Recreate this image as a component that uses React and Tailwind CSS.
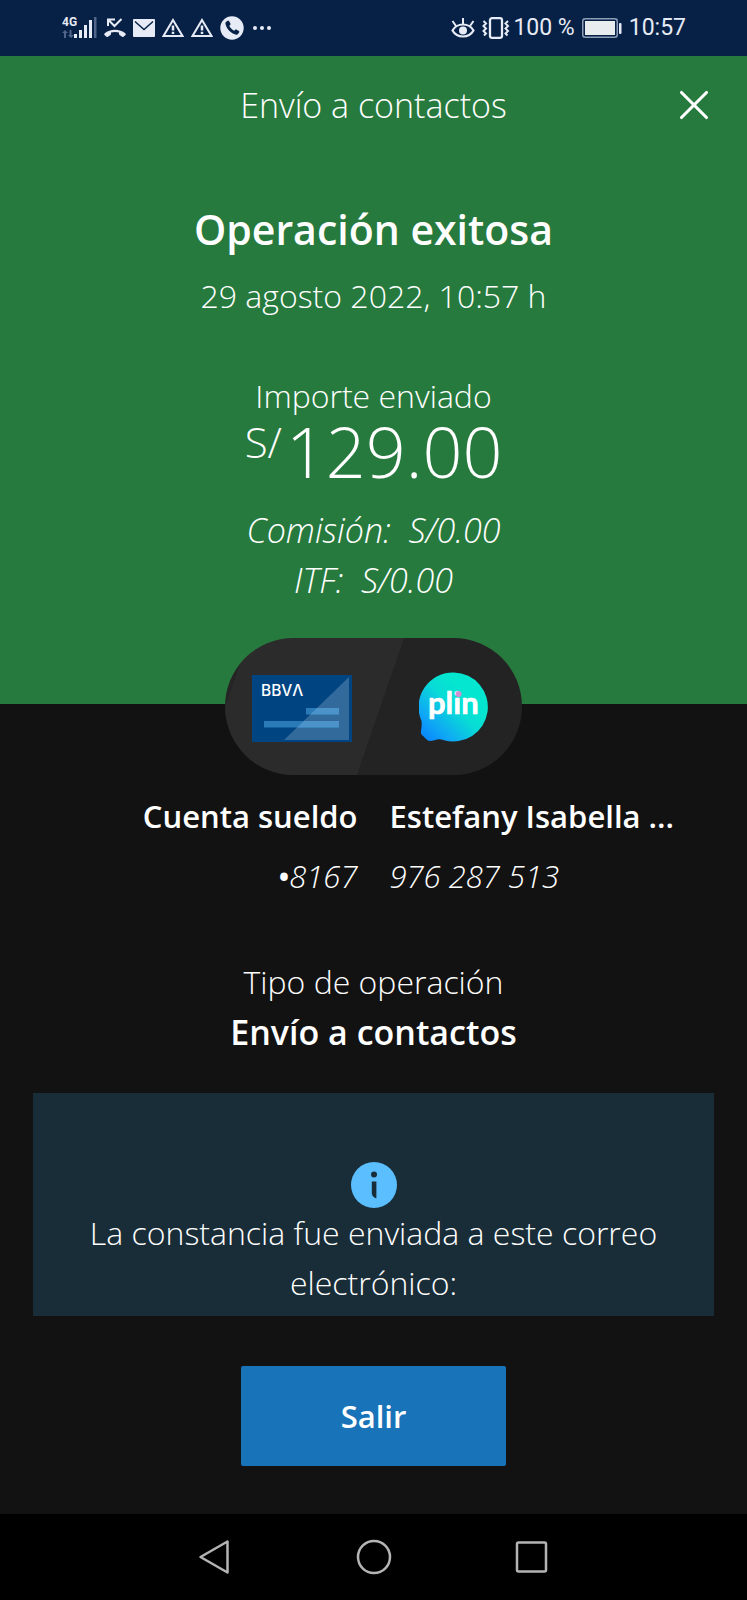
import { X } from 'lucide-react';

const SignalIcon = () => (
  <svg width="35" height="24" viewBox="0 0 35 24" fill="#e6ebf5">
    <text x="0" y="10" fontSize="12" fontWeight="700" fontFamily="Roboto, sans-serif">4G</text>
    <g fill="#51648a">
      <path d="M3 14l3 3H4v5H2v-5H0zM9 22l-3-3h1.500v-5h2v5H12z" />
      <rect x="32" y="1" width="2.500" height="21" />
    </g>
    <rect x="12" y="18" width="3" height="4" />
    <rect x="17" y="14" width="3" height="8" />
    <rect x="22" y="9" width="3" height="13" />
    <rect x="27" y="4" width="3" height="18" />
  </svg>
);

const MissedCallIcon = () => (
  <svg width="22" height="20" viewBox="0 0 22 20">
    <path d="M4 8V1.500h7M4.500 2l6 6 7-7" fill="none" stroke="#e6ebf5" strokeWidth="2" />
    <path
      d="M0.500 15.500C6 10.500 16 10.500 21.500 15.500c.5.500.5 1 0 1.400l-2 1.800c-.5.400-1 .4-1.400 0l-2.600-1.700c-.4-.3-.5-.6-.5-1v-1.500c-2.500-.7-5.500-.7-8 0V16c0 .4-.1.700-.5 1l-2.600 1.700c-.5.400-1 .4-1.400 0l-2-1.800c-.5-.4-.5-.9 0-1.400z"
      fill="#e6ebf5"
    />
  </svg>
);

const MailIcon = () => (
  <svg width="22" height="18" viewBox="0 0 22 18">
    <rect width="22" height="18" rx="1" fill="#e6ebf5" />
    <path d="M2 2.500l9 8 9-8" fill="none" stroke="#072146" strokeWidth="1.500" />
  </svg>
);

const WarningIcon = () => (
  <svg width="22" height="20" viewBox="0 0 22 20" fill="none" stroke="#e6ebf5" strokeWidth="2">
    <path d="M11 2L20.500 18H1.500z" />
    <path d="M11 7.500v5M11 13.700v2.300" strokeWidth="2.500" />
  </svg>
);

const PhoneIcon = () => (
  <svg width="24" height="24" viewBox="0 0 24 24">
    <circle cx="12" cy="12" r="11.700" fill="#e6ebf5" />
    <path
      d="M6.200 5.800l1.500-1c.5-.3 1-.2 1.300.3l1.500 2.600c.2.400.1.800-.2 1.100l-1 .9c.8 2 2.600 3.900 4.900 5l1-1c.3-.3.7-.4 1.100-.2l2.600 1.500c.5.300.6.800.3 1.300l-1 1.500c-.5.800-1.300 1.100-2.200.9C11 17.500 6.500 13 5.500 8c-.2-.9 0-1.700.7-2.200z"
      fill="#072146"
    />
  </svg>
);

const EyeIcon = () => (
  <svg width="24" height="22" viewBox="0 0 24 22" fill="none" stroke="#e6ebf5" strokeWidth="2.200">
    <path d="M1.500 13.500C6 5.500 18 5.500 22.500 13.500 18 21.500 6 21.500 1.500 13.500z" />
    <path d="M12 7V1M5 9L1.500 4M19 9l3.500-5" strokeWidth="2" />
    <circle cx="12" cy="13.500" r="4" fill="#e6ebf5" stroke="none" />
  </svg>
);

const VibrateIcon = () => (
  <svg width="28" height="22" viewBox="0 0 28 22" fill="none" stroke="#e6ebf5" strokeWidth="2">
    <rect x="8" y="1.200" width="12" height="19.600" rx="2" strokeWidth="2.300" />
    <path d="M1.500 4L4 6.500 1.500 9 4 11.500 1.500 14 4 16.500 2 18.500M26 4l-2.500 2.500L26 9l-2.500 2.500L26 14l-2.500 2.500 2 2" />
  </svg>
);

const BatteryIcon = () => (
  <svg width="40" height="20" viewBox="0 0 40 20">
    <rect x="0.750" y="0.750" width="34.500" height="18.500" rx="2.500" fill="none" stroke="#8e9cb5" strokeWidth="1.500" />
    <rect x="3" y="3" width="30" height="14" fill="#e9ecef" />
    <rect x="37" y="5" width="2.500" height="11" rx="1" fill="#e6ebf5" />
  </svg>
);

const BankCard = () => (
  <svg className="mt-1" width="100" height="67" viewBox="0 0 100 67" role="img" aria-label="BBVA">
    <rect width="100" height="67" fill="#004481" />
    <path d="M97 2V65H32z" fill="#336a9c" />
    <path d="M54 33h33v6.500H54zM12 46h75v6.500H12z" fill="#2a7ab8" />
    <path d="M65 33h22v6.500H58zM52 46h35v6.500H45z" fill="#4b93c9" />
    <text x="9" y="20.500" fontSize="15.500" fontWeight="500" fontFamily="Inter, sans-serif" fill="#fff">BBVΛ</text>
  </svg>
);

const PlinLogo = () => (
  <svg width="70" height="70" viewBox="0 0 70 70" role="img" aria-label="plin">
    <defs>
      <linearGradient id="plin" x1="0.050" y1="0.950" x2="0.700" y2="0.300">
        <stop offset="0" stopColor="#0a84ff" />
        <stop offset="0.300" stopColor="#0fa9f4" />
        <stop offset="0.700" stopColor="#08dcd6" />
        <stop offset="1" stopColor="#04e6cf" />
      </linearGradient>
    </defs>
    <path
      d="M35 .5A34.500 34.500 0 1 1 25 68.200C19 65.500 15 69 11 69 8 69 6 65.500 3.500 63.500 0 61 3.500 57 2.500 49A34.500 34.500 0 0 1 35 .5z"
      fill="url(#plin)"
    />
    <text
      x="9"
      y="42"
      fontSize="31"
      fontWeight="700"
      fontFamily="Lato, sans-serif"
      fill="#fff"
      stroke="#fff"
      strokeWidth="0.600"
      strokeLinejoin="round"
    >
      plin
    </text>
    <circle cx="39.500" cy="22" r="3" fill="#d18fd0" />
  </svg>
);

const InfoIcon = () => (
  <svg width="46" height="46" viewBox="0 0 46 46">
    <circle cx="23" cy="23" r="23" fill="#5bbeff" />
    <circle cx="23" cy="12.500" r="3" fill="#192d38" />
    <path d="M20.800 19.500h4.600V36.500c-2-.8-4.600-2.500-4.600-5z" fill="#192d38" />
  </svg>
);

const StatusBar = () => (
  <div className="flex h-14 items-center justify-between bg-[#072146] pr-[61px] pl-[62px] font-[Roboto,sans-serif] text-[23px] font-normal text-[#e6ebf5]">
    <div className="flex items-center gap-[7px]">
      <SignalIcon />
      <MissedCallIcon />
      <MailIcon />
      <WarningIcon />
      <WarningIcon />
      <PhoneIcon />
      <svg className="ml-0.5" width="18" height="4" viewBox="0 0 18 4" fill="#e6ebf5">
        <circle cx="2" cy="2" r="2" />
        <circle cx="9" cy="2" r="2" />
        <circle cx="16" cy="2" r="2" />
      </svg>
    </div>
    <div className="flex items-center gap-[7px]">
      <EyeIcon />
      <VibrateIcon />
      <span className="-ml-1">100 %</span>
      <BatteryIcon />
      <span>10:57</span>
    </div>
  </div>
);

const NavBar = () => (
  <nav className="mt-auto flex h-[86px] items-center justify-center gap-[121px] bg-black">
    <button aria-label="Atrás">
      <svg width="36" height="36" viewBox="0 0 36 36" fill="none" stroke="#b4b4b4" strokeWidth="2.500">
        <path d="M28.500 2.500V33.500L1.500 18z" strokeLinejoin="round" />
      </svg>
    </button>
    <button aria-label="Inicio">
      <svg width="36" height="36" viewBox="0 0 36 36" fill="none" stroke="#b4b4b4" strokeWidth="2.500">
        <circle cx="18" cy="18" r="16" />
      </svg>
    </button>
    <button aria-label="Recientes">
      <svg width="36" height="36" viewBox="0 0 36 36" fill="none" stroke="#b4b4b4" strokeWidth="2.500">
        <rect x="4" y="3.500" width="29" height="29" rx="1.500" />
      </svg>
    </button>
  </nav>
);

export default function App() {
  return (
    <div className="flex min-h-screen flex-col bg-[#121212] font-['Open_Sans',sans-serif] text-[32px] leading-[50px] font-light text-white">
      <StatusBar />

      {/* Result */}
      <section className="bg-[#277a3e] pb-[99px] text-center">
        <header className="grid h-[98px] grid-cols-[107px_1fr_107px] items-center">
          <h1 className="col-start-2 text-[34px]">Envío a contactos</h1>
          <button aria-label="Cerrar" className="flex justify-center">
            <X size={50} strokeWidth={1.5} />
          </button>
        </header>
        <h2 className="mt-[51px] text-[41px] leading-[48px] font-semibold">Operación exitosa</h2>
        <p className="mt-[18px]">29 agosto 2022, 10:57 h</p>
        <p className="mt-[50px]">Importe enviado</p>
        <p className="flex items-start justify-center gap-1 text-[70px] leading-[60px]">
          <span className="text-[42px] leading-[42px]">S/</span>
          129.00
        </p>
        <p className="mt-6 text-[34px] italic">Comisión:&nbsp; S/0.00</p>
        <p className="text-[34px] italic">ITF:&nbsp; S/0.00</p>
      </section>

      {/* Origin and destination */}
      <div className="relative -mt-[66px] flex h-[137px] w-[297px] items-center justify-between self-center overflow-hidden rounded-full bg-[linear-gradient(109deg,#252525_7%,#2b2b2b_7%,#2b2b2b_52%,#232323_52%)] pr-[33px] pl-[27px]">
        <BankCard />
        <PlinLogo />
      </div>
      <div className="mt-4 grid grid-cols-2 gap-x-8 gap-y-[10px] text-[31px] whitespace-nowrap">
        <p className="text-right font-semibold">Cuenta sueldo</p>
        <p className="font-semibold">Estefany Isabella ...</p>
        <p className="text-right italic">
          <span className="font-semibold">•</span>8167
        </p>
        <p className="italic">976 287 513</p>
      </div>

      <div className="mt-14 text-center">
        <p>Tipo de operación</p>
        <p className="text-[34px] font-semibold">Envío a contactos</p>
      </div>

      <div className="mx-[33px] mt-9 flex flex-col items-center bg-[#192d38] px-10 pt-[69px] pb-2 text-center">
        <InfoIcon />
        <p>La constancia fue enviada a este correo electrónico:</p>
      </div>

      <button className="mt-[50px] mb-12 h-[100px] w-[265px] self-center rounded-xs bg-[#1973b8] text-[31px] font-semibold">
        Salir
      </button>

      <NavBar />
    </div>
  );
}
